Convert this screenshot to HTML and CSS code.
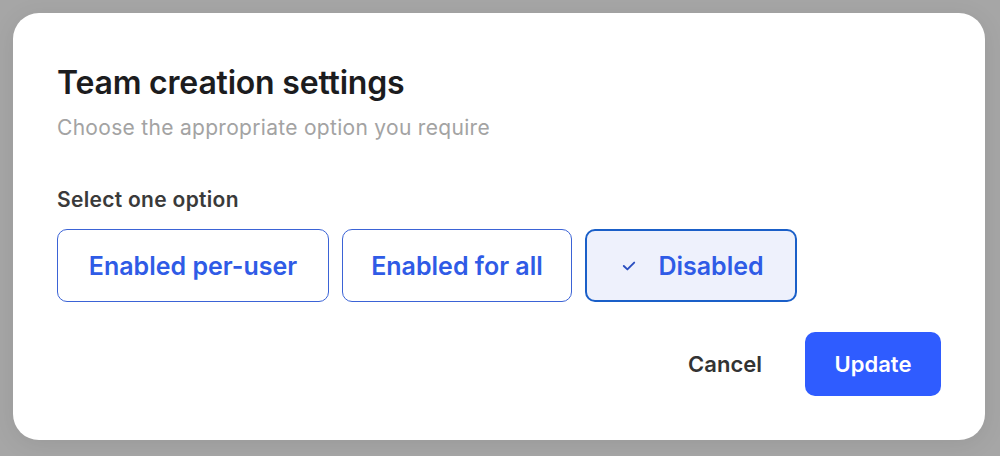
FILE: index.html
```html
<!DOCTYPE html>
<html lang="en">
<head>
    <meta charset="UTF-8">
    <meta name="viewport" content="width=device-width, initial-scale=1.0">
    <title>Team creation settings</title>
    <link rel="stylesheet" href="styles.css">
</head>
<body>
    <div class="modal">
        <h1 class="title">Team creation settings</h1>
        <p class="subtitle">Choose the appropriate option you require</p>

        <div class="field">
            <span class="label">Select one option</span>
            <div class="options">
                <button class="option opt-user">Enabled per-user</button>
                <button class="option opt-all">Enabled for all</button>
                <button class="option opt-off selected">
                    <svg class="check" width="14" height="14" viewBox="0 0 14 14">
                        <path d="M1.8 7 L5.4 10.4 L12.2 3.6" fill="none" stroke="currentColor" stroke-width="1.9" stroke-linecap="round" stroke-linejoin="round"/>
                    </svg>
                    Disabled
                </button>
            </div>
        </div>

        <div class="actions">
            <button class="btn-cancel">Cancel</button>
            <button class="btn-update">Update</button>
        </div>
    </div>
</body>
</html>
```

FILE: styles.css
```css
* {
    margin: 0;
    padding: 0;
    box-sizing: border-box;
}

body {
    background-color: #a6a6a6;
    padding: 13px 15px 16px 13px;
    height: 456px;
    font-family: 'Inter', 'Noto Sans', sans-serif;
    overflow: hidden;
}

.modal {
    background: white;
    width: 972px;
    height: 427px;
    border-radius: 26px;
    padding: 50px 44px 0 44px;
    box-shadow: 0 4px 24px rgba(0, 0, 0, 0.08);
    display: flex;
    flex-direction: column;
}

.title {
    font-size: 32px;
    font-weight: 600;
    color: #1c1c1e;
    letter-spacing: -0.2px;
    line-height: 40px;
}

.subtitle {
    font-size: 21px;
    color: #a3a3a3;
    margin-top: 12px;
    line-height: 26px;
    letter-spacing: 0.3px;
}

.field {
    margin-top: 46px;
}

.label {
    display: block;
    font-size: 21px;
    font-weight: 600;
    color: #3a3a3a;
    line-height: 26px;
    letter-spacing: 0.3px;
}

.options {
    display: flex;
    gap: 13px;
    margin-top: 16px;
}

.option {
    height: 73px;
    background: white;
    border: 1px solid #3b63d6;
    border-radius: 10px;
    color: #2f5be6;
    font-family: inherit;
    font-size: 25px;
    font-weight: 600;
    display: flex;
    align-items: center;
    justify-content: center;
    gap: 22px;
    cursor: pointer;
}

.opt-user { width: 272px; }
.opt-all { width: 230px; }
.opt-off { width: 212px; }

.option.selected {
    background: #eef1fc;
    border: 2px solid #1a5fc8;
    padding-left: 4px;
}

.check {
    color: #2a4fc0;
}

.actions {
    display: flex;
    justify-content: flex-end;
    align-items: center;
    gap: 43px;
    margin-top: 30px;
}

.btn-cancel {
    background: none;
    border: none;
    font-family: inherit;
    font-size: 22px;
    font-weight: 600;
    color: #333;
    cursor: pointer;
}

.btn-update {
    width: 136px;
    height: 64px;
    background: #2f5cff;
    border: none;
    border-radius: 10px;
    color: white;
    font-family: inherit;
    font-size: 22px;
    font-weight: 600;
    cursor: pointer;
}
```
